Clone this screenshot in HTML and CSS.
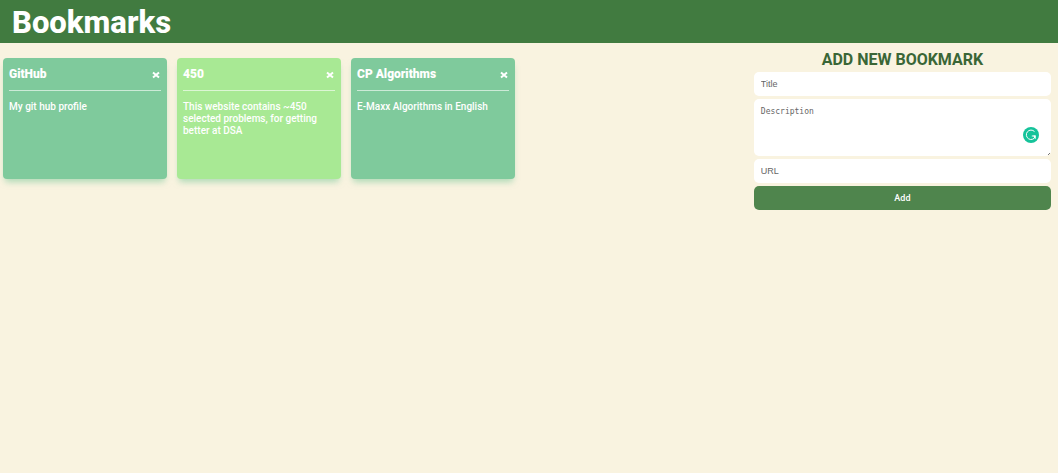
FILE: index.html
```html
<!DOCTYPE html>
<html lang="en">
<head>
<meta charset="utf-8">
<meta name="viewport" content="width=device-width, initial-scale=1">
<title>Bookmarks</title>
<link rel="stylesheet" href="styles.css">
</head>
<body>
<header class="header"><h1 class="header-title">Bookmarks</h1></header>
<div class="layout">
  <main class="cards">
    <article class="card">
      <div class="card-head"><h2 class="card-title">GitHub</h2><button class="card-close" type="button" aria-label="Delete GitHub"><svg viewBox="0 0 8 8"><path d="M1 1.500L7 6.500M7 1.500L1 6.500"/></svg></button></div>
      <p class="card-text">My git hub profile</p>
    </article>
    <article class="card card-light">
      <div class="card-head"><h2 class="card-title">450</h2><button class="card-close" type="button" aria-label="Delete 450"><svg viewBox="0 0 8 8"><path d="M1 1.500L7 6.500M7 1.500L1 6.500"/></svg></button></div>
      <p class="card-text">This website contains ~450 selected problems, for getting better at DSA</p>
    </article>
    <article class="card">
      <div class="card-head"><h2 class="card-title">CP Algorithms</h2><button class="card-close" type="button" aria-label="Delete CP Algorithms"><svg viewBox="0 0 8 8"><path d="M1 1.500L7 6.500M7 1.500L1 6.500"/></svg></button></div>
      <p class="card-text">E-Maxx Algorithms in English</p>
    </article>
  </main>
  <aside class="sidebar">
    <h2 class="form-title">ADD NEW BOOKMARK</h2>
    <form class="form">
      <input class="field" type="text" placeholder="Title" aria-label="Title">
      <div class="area-wrap">
        <textarea class="field area" placeholder="Description" aria-label="Description"></textarea>
        <svg class="badge" viewBox="0 0 16 16" aria-hidden="true"><circle cx="8" cy="8" r="8" fill="#15c39a"/><path d="M11.500 4.600A4.700 4.700 0 1 0 12.300 9.800M8.800 9H12.500" fill="none" stroke="#fff" stroke-width="1"/><path d="M10.300 8.600H12.700V12.300L11.400 11Z" fill="#fff"/></svg>
        <svg class="grip" viewBox="0 0 4 4" aria-hidden="true"><path d="M1 3L3 1"/></svg>
      </div>
      <input class="field" type="url" placeholder="URL" aria-label="URL">
      <button class="submit" type="submit">Add</button>
    </form>
  </aside>
</div>
</body>
</html>
```
FILE: styles.css
```css
* {
  box-sizing: border-box;
}

body {
  margin: 0;
  min-height: 100vh;
  background: #f9f3e0;
  font-family: Roboto, "Liberation Sans", Arial, sans-serif;
}

h1, h2, p {
  margin: 0;
}

.header {
  padding: 5px 12px 3px;
  background: #417b40;
  color: #fff;
}

.header-title {
  font-size: 31px;
  font-weight: 800;
  line-height: 35px;
}

.layout {
  display: flex;
  align-items: flex-start;
}

.cards {
  flex: 1;
  display: grid;
  grid-template-columns: repeat(auto-fill, 164px);
  gap: 10px;
  padding: 15px 3px;
}

.card {
  min-height: 121px;
  padding: 6px;
  border-radius: 4px;
  background: #7fca9c;
  box-shadow: 0 5px 6px -2px rgba(127, 202, 156, 0.6);
  color: #fff;
}

.card-light {
  background: #a8e994;
}

.card-head {
  display: flex;
  align-items: center;
  justify-content: space-between;
  padding-bottom: 6px;
  border-bottom: 1px solid rgba(255, 255, 255, 0.6);
}

.card-title {
  font-size: 12px;
  font-weight: 900;
  line-height: 20px;
}

.card-close {
  display: flex;
  padding: 2px 1px 0;
  border: 0;
  background: none;
  cursor: pointer;
}

.card-close svg {
  width: 8px;
  height: 8px;
  fill: none;
  stroke: #fff;
  stroke-width: 2;
}

.card-text {
  padding-top: 10px;
  font-size: 10px;
  font-weight: 500;
  line-height: 12px;
}

.sidebar {
  width: 28.75%;
  padding: 7px 7px 0 0;
}

.form-title {
  color: #3a6636;
  font-size: 16px;
  font-weight: 700;
  line-height: 20px;
  text-align: center;
}

.form {
  display: flex;
  flex-direction: column;
  gap: 3px;
  padding-top: 2px;
}

.field {
  display: block;
  width: 100%;
  height: 24px;
  padding: 0 7px;
  border: 0;
  border-radius: 5px;
  background: #fff;
  color: #444;
  font: 9px "Liberation Sans", Arial, sans-serif;
}

.field::placeholder {
  color: #666;
  opacity: 1;
}

.area-wrap {
  position: relative;
}

.area {
  height: 57px;
  padding: 8px 7px;
  font: 8px/10px "DejaVu Sans Mono", monospace;
  resize: none;
}

.badge {
  position: absolute;
  right: 12px;
  bottom: 13px;
  width: 16px;
  height: 16px;
}

.grip {
  position: absolute;
  right: 0;
  bottom: 0;
  width: 4px;
  height: 4px;
  fill: none;
  stroke: #777;
}

.submit {
  height: 24px;
  padding: 0;
  border: 0;
  border-radius: 5px;
  background: #4f854d;
  color: #fff;
  font: 500 9px Roboto, "Liberation Sans", Arial, sans-serif;
  cursor: pointer;
}
```
